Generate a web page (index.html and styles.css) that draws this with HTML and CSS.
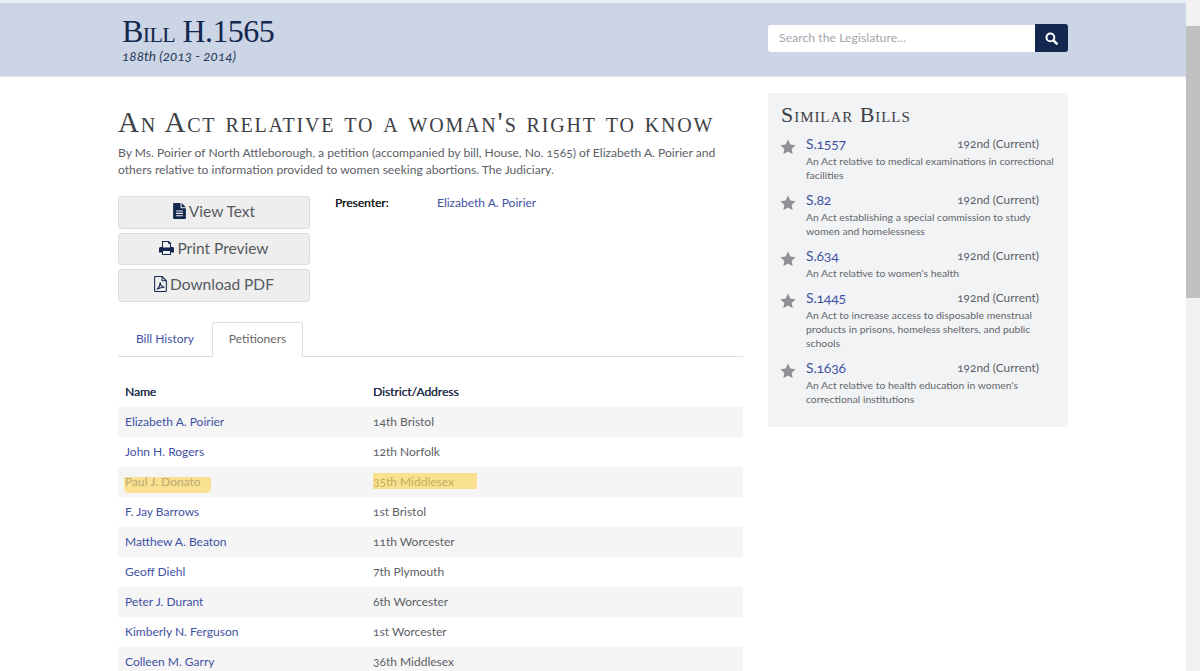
FILE: index.html
```html
<!DOCTYPE html>
<html lang="en">
<head>
<meta charset="utf-8">
<title>Bill H.1565</title>
<link rel="stylesheet" href="styles.css">
</head>
<body>
<div class="page">
  <header class="banner">
    <div class="banner-title">
      <h1>Bill H.1565</h1>
      <p>188th (2013 - 2014)</p>
    </div>
    <form class="search">
      <div class="search-input">Search the Legislature...</div>
      <div class="search-btn">
        <svg viewBox="0 0 14 14" width="13" height="13"><circle cx="5.8" cy="5.8" r="4.2" fill="none" stroke="#fff" stroke-width="2.2"/><path d="M9 9l3.6 3.6" stroke="#fff" stroke-width="2.6" stroke-linecap="round"/></svg>
      </div>
    </form>
  </header>
  <div class="layout">
    <main class="content">
      <h2 class="act-title">An Act relative to a woman's right to know</h2>
      <p class="desc">By Ms. Poirier of North Attleborough, a petition (accompanied by bill, House, No. 1565) of Elizabeth A. Poirier and others relative to information provided to women seeking abortions. The Judiciary.</p>
      <div class="actions">
        <div class="buttons">
          <a class="btn"><svg class="ico" viewBox="0 0 12 15" width="13" height="16"><path fill="#14284f" fill-rule="evenodd" d="M0 1.2C0 .5.5 0 1.2 0H7v4.2c0 .5.3.8.8.8H12v8.8c0 .7-.5 1.2-1.2 1.2H1.2C.5 15 0 14.500 0 13.800zM2.800 7v1h6.400V7zm0 2.200v1h6.400v-1zm0 2.200v1h6.400v-1zM8 0l4 4H8z"/></svg> View Text</a>
          <a class="btn"><svg class="ico" viewBox="0 0 15 14" width="15" height="14"><path fill="#14284f" fill-rule="evenodd" d="M3 0h7l2 2v4h1.300C14.300 6 15 6.700 15 7.700v3.800h-3V14H3v-2.500H0V7.700C0 6.700.7 6 1.700 6H3zm1 1v5.500h7V3H9.500L9 1zM4 10v3h7v-3z"/></svg> Print Preview</a>
          <a class="btn"><svg class="ico" viewBox="0 0 12 15" width="13" height="16"><path fill="none" stroke="#14284f" stroke-width="1" d="M.5 1.200C.5.800.8.500 1.200.500H7.500L11.500 4.500v9.300c0 .4-.3.7-.7.7H1.200c-.4 0-.7-.3-.7-.7zM7.500.500V4.500h4M2.500 12.500c1.500-1 3-4 3.200-6.500.2 2.500 2 4.500 4 4.500-2.500 0-5 .8-7.200 2z"/></svg> Download PDF</a>
        </div>
        <div class="presenter">
          <strong>Presenter:</strong>
          <a class="link">Elizabeth A. Poirier</a>
        </div>
      </div>
      <nav class="tabs">
        <a class="tab">Bill History</a>
        <a class="tab tab-active">Petitioners</a>
      </nav>
      <table class="petitioners">
        <thead>
          <tr><th class="col-name">Name</th><th>District/Address</th></tr>
        </thead>
        <tbody>
          <tr><td><a class="link">Elizabeth A. Poirier</a></td><td>14th Bristol</td></tr>
          <tr><td><a class="link">John H. Rogers</a></td><td>12th Norfolk</td></tr>
          <tr><td class="mark-cell"><a class="link">Paul J. Donato</a><span class="mark mark-name"></span></td><td class="mark-cell">35th Middlesex<span class="mark mark-district"></span></td></tr>
          <tr><td><a class="link">F. Jay Barrows</a></td><td>1st Bristol</td></tr>
          <tr><td><a class="link">Matthew A. Beaton</a></td><td>11th Worcester</td></tr>
          <tr><td><a class="link">Geoff Diehl</a></td><td>7th Plymouth</td></tr>
          <tr><td><a class="link">Peter J. Durant</a></td><td>6th Worcester</td></tr>
          <tr><td><a class="link">Kimberly N. Ferguson</a></td><td>1st Worcester</td></tr>
          <tr><td><a class="link">Colleen M. Garry</a></td><td>36th Middlesex</td></tr>
        </tbody>
      </table>
    </main>
    <aside class="similar">
      <h3>Similar Bills</h3>
      <div class="bill">
        <svg class="star" viewBox="0 0 16 16" width="16" height="16"><path fill="#8f9093" d="M8 .6l2.300 4.900 5.300.7-3.900 3.700 1 5.300L8 12.600l-4.700 2.600 1-5.300L.4 6.200l5.300-.7z"/></svg>
        <div class="bill-body">
          <div class="bill-head"><a class="bill-no">S.1557</a><span class="session">192nd (Current)</span></div>
          <p>An Act relative to medical examinations in correctional facilities</p>
        </div>
      </div>
      <div class="bill">
        <svg class="star" viewBox="0 0 16 16" width="16" height="16"><path fill="#8f9093" d="M8 .6l2.300 4.900 5.300.7-3.900 3.700 1 5.300L8 12.600l-4.700 2.600 1-5.300L.4 6.200l5.300-.7z"/></svg>
        <div class="bill-body">
          <div class="bill-head"><a class="bill-no">S.82</a><span class="session">192nd (Current)</span></div>
          <p>An Act establishing a special commission to study women and homelessness</p>
        </div>
      </div>
      <div class="bill">
        <svg class="star" viewBox="0 0 16 16" width="16" height="16"><path fill="#8f9093" d="M8 .6l2.300 4.900 5.300.7-3.900 3.700 1 5.300L8 12.600l-4.700 2.600 1-5.300L.4 6.200l5.300-.7z"/></svg>
        <div class="bill-body">
          <div class="bill-head"><a class="bill-no">S.634</a><span class="session">192nd (Current)</span></div>
          <p>An Act relative to women's health</p>
        </div>
      </div>
      <div class="bill">
        <svg class="star" viewBox="0 0 16 16" width="16" height="16"><path fill="#8f9093" d="M8 .6l2.300 4.900 5.300.7-3.900 3.700 1 5.300L8 12.600l-4.700 2.600 1-5.300L.4 6.200l5.300-.7z"/></svg>
        <div class="bill-body">
          <div class="bill-head"><a class="bill-no">S.1445</a><span class="session">192nd (Current)</span></div>
          <p>An Act to increase access to disposable menstrual products in prisons, homeless shelters, and public schools</p>
        </div>
      </div>
      <div class="bill">
        <svg class="star" viewBox="0 0 16 16" width="16" height="16"><path fill="#8f9093" d="M8 .6l2.300 4.900 5.300.7-3.900 3.700 1 5.300L8 12.600l-4.700 2.600 1-5.300L.4 6.200l5.300-.7z"/></svg>
        <div class="bill-body">
          <div class="bill-head"><a class="bill-no">S.1636</a><span class="session">192nd (Current)</span></div>
          <p>An Act relative to health education in women's correctional institutions</p>
        </div>
      </div>
    </aside>
  </div>
</div>
<div class="scrollbar"><div class="thumb"></div></div>
</body>
</html>
```
FILE: styles.css
```css
* { box-sizing: border-box; }
html, body { margin: 0; height: 671px; overflow: hidden; }
body {
  display: flex;
  background: #fff;
  color: #5c6066;
  font-family: "Lato", "Liberation Sans", sans-serif;
  font-size: 12px;
  font-variant-numeric: oldstyle-nums;
}
.page { flex: 1; min-width: 0; height: 671px; overflow: hidden; }
.scrollbar { width: 14px; height: 671px; background: #f1f1f1; padding-top: 26px; }
.thumb { height: 272px; background: #c1c1c1; }

.banner {
  display: flex;
  justify-content: space-between;
  align-items: flex-start;
  height: 77px;
  border-top: 3px solid #e9edf5;
  border-bottom: 1px solid #dfe5ef;
  background: #cbd5e5;
  padding: 0 118px 0 122px;
}
.banner-title h1 {
  margin: 9px 0 0;
  font: 400 32px/38px "Liberation Serif", serif;
  font-variant: small-caps;
  color: #14284f;
  letter-spacing: -.6px;
}
.banner-title p {
  margin: -2px 0 0;
  font-style: italic;
  font-size: 13.6px;
  line-height: 16px;
  color: #2c3c60;
}
.search { display: flex; width: 300px; margin-top: 21px; }
.search-input {
  flex: 1;
  height: 27px;
  margin-top: 1px;
  background: #fff;
  border-radius: 3px 0 0 3px;
  padding: 0 11px;
  font-size: 12.3px;
  line-height: 26px;
  color: #a3a6aa;
}
.search-btn {
  width: 33px;
  height: 28px;
  background: #14284f;
  border-radius: 0 3px 3px 0;
  display: flex;
  align-items: center;
  justify-content: center;
}

.layout {
  display: grid;
  grid-template-columns: 625px 300px;
  gap: 25px;
  padding: 16px 0 0 118px;
  align-items: start;
}
.act-title {
  margin: 11px 0 0;
  font: 400 29px/36px "Liberation Serif", serif;
  font-variant: small-caps;
  color: #3d4045;
  letter-spacing: 1.8px;
  white-space: nowrap;
}
.desc {
  margin: 4px 0 0;
  font-size: 12.1px;
  line-height: 17px;
}
.actions { display: flex; margin-top: 18px; }
.buttons { display: flex; flex-direction: column; gap: 4px; width: 192px; }
.btn {
  height: 32.5px;
  display: flex;
  align-items: center;
  justify-content: center;
  gap: 3px;
  padding-bottom: 2px;
  background: #eee;
  border: 1.5px solid #ddd;
  border-radius: 3px;
  font-size: 15.5px;
  color: #555a60;
}
.ico { flex: none; }
.presenter { display: flex; margin: -1px 0 0 25px; line-height: 16px; }
.presenter strong { width: 102px; font-weight: 400; color: #222; text-shadow: .2px 0 0 #222; }
.link { color: #3f51a3; }

.tabs {
  display: flex;
  margin-top: 20.5px;
  height: 35px;
  border-bottom: 1px solid #ddd;
}
.tab {
  width: 94px;
  height: 35px;
  text-align: center;
  line-height: 34px;
  color: #3f51a3;
}
.tab-active {
  width: 91px;
  background: #fff;
  border: 1px solid #ddd;
  border-bottom-color: #fff;
  border-radius: 3px 3px 0 0;
  line-height: 32px;
  color: #666;
}

.petitioners {
  width: 625px;
  margin-top: 20px;
  border-collapse: collapse;
  table-layout: fixed;
}
.petitioners th {
  text-align: left;
  font-weight: 400;
  color: #26304a;
  text-shadow: .2px 0 0 #26304a;
}
.petitioners th, .petitioners td { height: 30px; padding: 0 7px 1px; }
.col-name { width: 248px; }
.petitioners tbody tr:nth-child(odd) { background: #f5f5f5; }
.mark-cell { position: relative; }
.mark { position: absolute; background: rgba(250, 213, 90, .65); }
.mark-name { left: 6px; top: 10px; width: 87px; height: 16px; border-radius: 1px 2px 5px 5px; }
.mark-district { left: 7px; top: 6px; width: 104px; height: 16px; }

.similar {
  height: 334px;
  background: #f2f3f5;
  padding: 9px 11px 9px 12px;
}
.similar h3 {
  margin: 0 0 6px 1px;
  font: 400 22px/26px "Liberation Serif", serif;
  font-variant: small-caps;
  color: #3d4045;
  letter-spacing: .95px;
}
.bill { display: flex; gap: 10px; margin-bottom: 8px; }
.star { flex: none; margin-top: 5px; }
.bill-body { flex: 1; }
.bill-head { display: flex; justify-content: space-between; height: 20px; padding-right: 18px; }
.bill-no { font-size: 14px; line-height: 20px; color: #3f51a3; letter-spacing: -.2px; }
.session { margin-top: 3px; font-size: 11.8px; line-height: 14px; letter-spacing: .05px; }
.bill-body p { margin: 0; font-size: 10.4px; line-height: 14px; color: #62666b; }
```
